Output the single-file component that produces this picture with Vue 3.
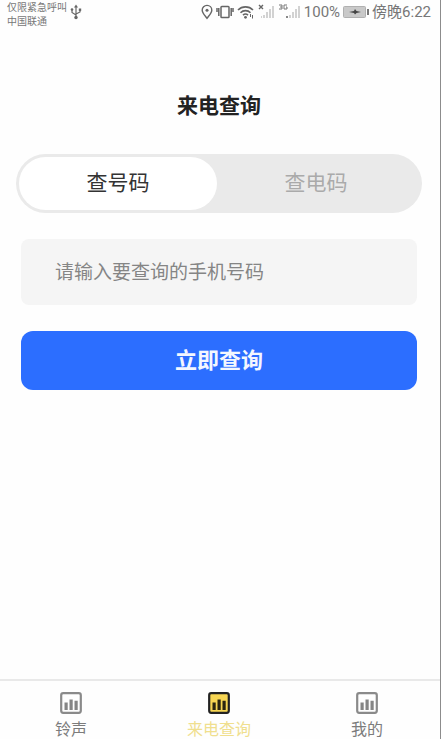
<script setup>
import { ref } from 'vue'

const mode = ref('number')
const phone = ref('')
const tabs = [
  { id: 'ring', label: '铃声' },
  { id: 'query', label: '来电查询' },
  { id: 'mine', label: '我的' },
]
const current = ref('query')
</script>

<template>
  <div class="page">
    <header class="status">
      <div class="carrier">
        <span>仅限紧急呼叫</span>
        <span>中国联通</span>
      </div>
      <svg class="usb" width="12" height="16" viewBox="0 0 12 16" fill="none" stroke="#666" stroke-width="1.2">
        <path d="M6 3v10M2 6v2.500L6 11M10 6v2L6 10" />
        <path d="M6 0.500L4 3.500h4z" fill="#666" stroke="none" />
        <circle cx="6" cy="13.500" r="1.700" fill="#666" stroke="none" />
        <circle cx="2" cy="5.500" r="1.300" fill="#666" stroke="none" />
        <path d="M8.800 4.500h2.400v2.400H8.800z" fill="#666" stroke="none" />
      </svg>
      <div class="signals">
        <svg width="12" height="16" viewBox="0 0 12 16" fill="none" stroke="#666" stroke-width="1.400">
          <path d="M6 14.300C3.500 11 1.200 8.900 1.200 6.200a4.800 4.800 0 0 1 9.600 0C10.800 8.900 8.500 11 6 14.300z" />
          <circle cx="6" cy="6.200" r="1.500" fill="#666" stroke="none" />
        </svg>
        <svg width="18" height="16" viewBox="0 0 18 16" fill="none" stroke="#666" stroke-width="1.500">
          <rect x="5" y="2.500" width="8" height="11" rx="0.800" />
          <path d="M2.800 4v8M15.200 4v8M1 4v4M17 4v4" />
        </svg>
        <svg width="18" height="16" viewBox="0 0 18 16" fill="none" stroke="#666" stroke-width="1.600">
          <path d="M1 6a10.500 10.500 0 0 1 15 0M3.500 8.700a7 7 0 0 1 10 0M6 11.200a3.600 3.600 0 0 1 5 0" />
          <circle cx="8.500" cy="13.300" r="1.400" fill="#666" stroke="none" />
          <path d="M15.500 11v3.500M13.500 10v3" stroke-width="1" />
        </svg>
        <svg width="17" height="16" viewBox="0 0 17 16">
          <path d="M1 1l4 4M5 1L1 5" stroke="#666" stroke-width="1.400" />
          <path d="M3 12h1v2H3zM5 11h2v3H5zM8 8h2v6H8zM11 5h2v9h-2zM14 2h2v12h-2z" fill="#d2d2d2" />
        </svg>
        <svg width="23" height="16" viewBox="0 0 23 16">
          <path d="M1 1h3v4H1M2 3h2M9 1H6v4h3V3H8" fill="none" stroke="#777" />
          <path d="M8 12h2v2H8z" fill="#888" />
          <path d="M11 11h2v3h-2zM14 8h2v6h-2zM17 5h2v9h-2zM20 2h2v12h-2z" fill="#d2d2d2" />
        </svg>
        <span>100%</span>
        <svg width="26" height="14" viewBox="0 0 26 14">
          <rect x="0.500" y="1.500" width="22" height="11" rx="1" fill="#c9c9c9" stroke="#b0b0b0" />
          <path d="M24 4h2v6h-2z" fill="#777" />
          <path d="M6 7l5-1 1-2 1.500 2L18 7l-4.500 1-1.500 1.500L11 8z" fill="#444" />
        </svg>
        <span>傍晚6:22</span>
      </div>
    </header>

    <main class="content">
      <h1 class="title">来电查询</h1>
      <div class="segments">
        <button type="button" class="segment" :class="{ active: mode === 'number' }" @click="mode = 'number'">查号码</button>
        <button type="button" class="segment" :class="{ active: mode === 'code' }" @click="mode = 'code'">查电码</button>
      </div>
      <form class="form" @submit.prevent>
        <input v-model="phone" class="field" type="tel" placeholder="请输入要查询的手机号码" aria-label="请输入要查询的手机号码" />
        <button class="submit" type="submit">立即查询</button>
      </form>
    </main>

    <nav class="tabs">
      <button v-for="tab in tabs" :key="tab.id" type="button" class="tab" :class="{ active: current === tab.id }" @click="current = tab.id">
        <svg width="22" height="22" viewBox="0 0 22 22">
          <rect class="frame" x="1.200" y="1.200" width="19.600" height="19.600" rx="2" stroke-width="2.200" />
          <path class="bars" d="M4.500 10.500h3.200v7.500H4.500zM9.500 7.500h3.200V18H9.500zM14.500 8.800h3.200V18h-3.200z" />
        </svg>
        <span>{{ tab.label }}</span>
      </button>
    </nav>
  </div>
</template>

<style>
body {
  margin: 0;
  background: #fefefe;
}
</style>

<style scoped>
.page {
  box-sizing: border-box;
  min-height: 100vh;
  display: flex;
  flex-direction: column;
  border-right: 1px solid #8c8c8c;
  background: #fefefe;
  font-family: "Noto Sans CJK SC", sans-serif;
}

button,
input {
  box-sizing: border-box;
  margin: 0;
  border: 0;
  font-family: inherit;
}

button {
  cursor: pointer;
}

svg {
  display: block;
  flex: none;
}

.status {
  display: flex;
  align-items: flex-start;
  padding: 0 9px 0 7px;
  color: #777;
  white-space: nowrap;
}

.carrier {
  display: flex;
  flex-direction: column;
  font-size: 10px;
  line-height: 14px;
}

.usb {
  margin: 4px 0 0 3px;
}

.signals {
  display: flex;
  align-items: center;
  margin-left: auto;
  gap: 3px;
  font-family: Roboto, "Noto Sans CJK SC", sans-serif;
  font-size: 15px;
  line-height: 24px;
}

.content {
  flex: 1;
  display: flex;
  flex-direction: column;
  padding: 60px 18px 0 16px;
}

.title {
  margin: 0;
  color: #222;
  font-size: 21px;
  line-height: 32px;
  font-weight: 700;
  text-align: center;
}

.segments {
  display: flex;
  height: 59px;
  margin-top: 34px;
  padding: 3px 7px 3px 3px;
  box-sizing: border-box;
  border-radius: 30px;
  background: #eaeaea;
}

.segment {
  flex: 1;
  padding: 0 0 6px;
  border-radius: 27px;
  background: transparent;
  color: #aaa;
  font-size: 21px;
  line-height: 32px;
}

.segment.active {
  background: #fff;
  color: #333;
}

.form {
  display: flex;
  flex-direction: column;
  gap: 26px;
  margin: 26px 5px 0;
}

.field {
  width: 100%;
  height: 66px;
  padding: 0 34px 4px;
  border-radius: 8px;
  background: #f5f5f5;
  color: #333;
  font-size: 19px;
}

.field::placeholder {
  color: #858585;
  opacity: 1;
}

.submit {
  height: 59px;
  padding: 0 0 6px;
  border-radius: 12px;
  background: #2c6eff;
  color: #f3f7ff;
  font-size: 22px;
  line-height: 32px;
  font-weight: 700;
}

.tabs {
  display: flex;
  justify-content: space-between;
  padding: 11px 41px 0 39px;
  border-top: 2px solid #e9e9e9;
}

.tab {
  display: flex;
  flex-direction: column;
  align-items: center;
  width: 64px;
  gap: 3px;
  padding: 0;
  background: transparent;
  color: #7c7c7c;
  font-size: 16px;
  line-height: 22px;
  white-space: nowrap;
}

.frame {
  fill: none;
  stroke: #8a8a8a;
}

.bars {
  fill: #858585;
}

.tab.active {
  color: #f0df8e;
}

.tab.active .frame {
  fill: #f7d653;
  stroke: #222;
}

.tab.active .bars {
  fill: #2a2510;
}
</style>
